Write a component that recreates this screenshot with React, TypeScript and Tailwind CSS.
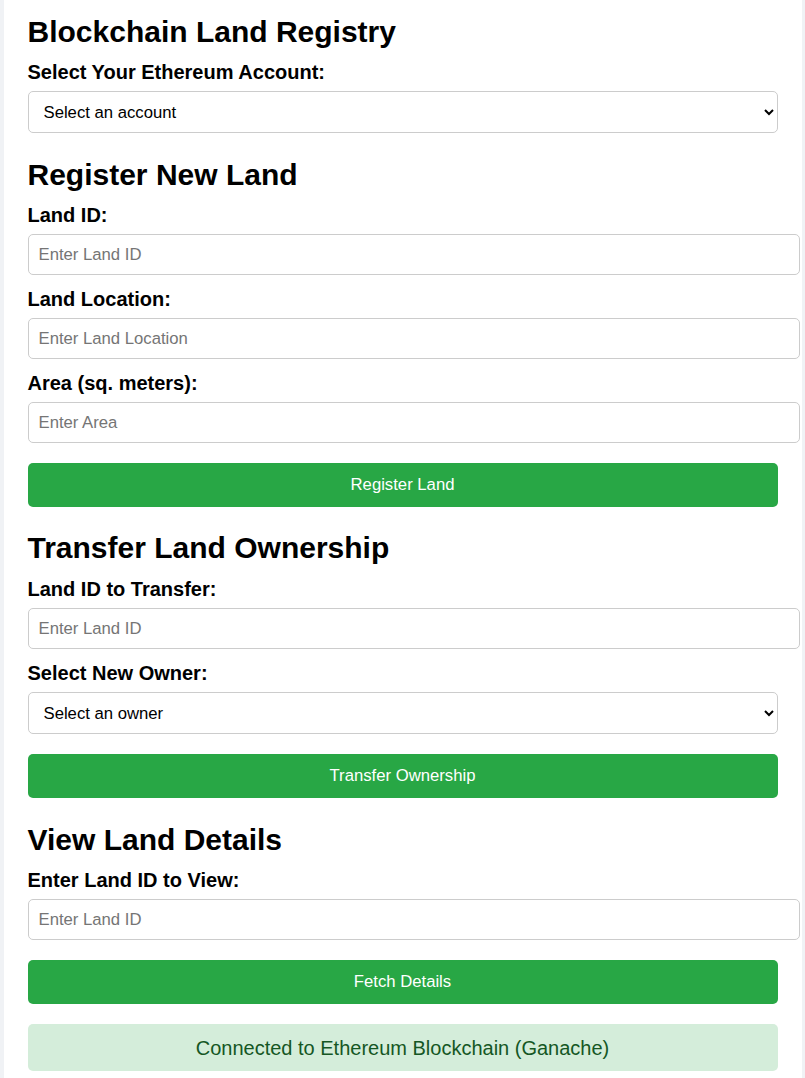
import React from "react";

const font = { fontFamily: '"Liberation Sans", Arial, sans-serif' };

function Label({ children, className = "" }: { children: React.ReactNode; className?: string }) {
  return (
    <label className={`block text-[20px] leading-[23px] font-bold text-black mb-[7px] ${className}`}>
      {children}
    </label>
  );
}

function Input({ placeholder }: { placeholder: string }) {
  return (
    <input
      type="text"
      placeholder={placeholder}
      className="block w-[772px] h-[41px] px-[10px] border border-[#cccccc] rounded-[5px] text-[16.7px] text-black bg-white placeholder:text-[#757575] outline-none"
    />
  );
}

function Select({ text }: { text: string }) {
  return (
    <select className="block w-[750px] h-[42px] pl-[11px] pr-[10px] border border-[#cccccc] rounded-[5px] text-[16.7px] text-black bg-white outline-none">
      <option>{text}</option>
    </select>
  );
}

function Button({ children, className = "" }: { children: React.ReactNode; className?: string }) {
  return (
    <button className={`block w-[750px] h-[44px] bg-[#28a745] text-white text-[16.7px] rounded-[5px] ${className}`}>
      {children}
    </button>
  );
}

function H({ children, className = "" }: { children: React.ReactNode; className?: string }) {
  return <h2 className={`text-[30px] leading-[34px] font-bold text-black ${className}`}>{children}</h2>;
}

export default function App() {
  return (
    <div className="min-h-screen bg-[#f0f2f5]" style={font}>
      <div className="w-[798px] mx-auto bg-white px-6 pt-[15px] pb-6 min-h-[1078px]">
        <H className="mb-[12px]">Blockchain Land Registry</H>
        <Label>Select Your Ethereum Account:</Label>
        <Select text="Select an account" />

        <H className="mt-[25px] mb-[12px]">Register New Land</H>
        <Label>Land ID:</Label>
        <Input placeholder="Enter Land ID" />
        <Label className="mt-[13px]">Land Location:</Label>
        <Input placeholder="Enter Land Location" />
        <Label className="mt-[13px]">Area (sq. meters):</Label>
        <Input placeholder="Enter Area" />
        <Button className="mt-[20px]">Register Land</Button>

        <H className="mt-[24px] mb-[13px]">Transfer Land Ownership</H>
        <Label>Land ID to Transfer:</Label>
        <Input placeholder="Enter Land ID" />
        <Label className="mt-[13px]">Select New Owner:</Label>
        <Select text="Select an owner" />
        <Button className="mt-[20px]">Transfer Ownership</Button>

        <H className="mt-[25px] mb-[12px]">View Land Details</H>
        <Label>Enter Land ID to View:</Label>
        <Input placeholder="Enter Land ID" />
        <Button className="mt-[20px]">Fetch Details</Button>

        <div className="mt-[20px] w-[750px] h-[47px] flex items-center justify-center bg-[#d4edda] text-[#155724] text-[20px] rounded-[5px]">
          Connected to Ethereum Blockchain (Ganache)
        </div>
      </div>
    </div>
  );
}
